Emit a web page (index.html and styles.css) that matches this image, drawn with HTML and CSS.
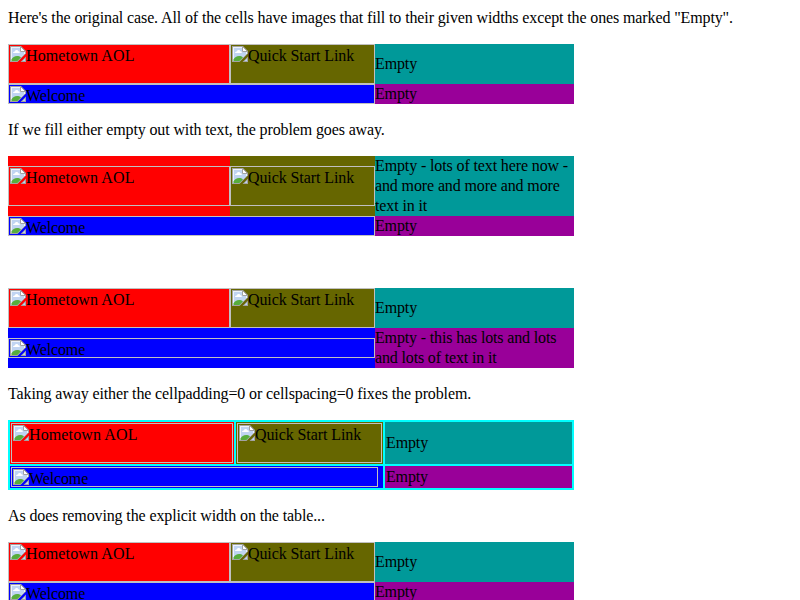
FILE: index.html
```html
<!DOCTYPE html>
<html lang="en">
<head>
<meta charset="utf-8">
<title>Table widths</title>
<link rel="stylesheet" href="styles.css">
</head>
<body>
<svg class="defs" aria-hidden="true">
  <symbol id="pic" viewBox="0 0 16 16">
    <path d="M0 0H11L16 5V7.500L7.500 16H0Z" fill="#a3a3a3"/>
    <path d="M1 1H10.500L15 5.500V7.500L7.500 15H1Z" fill="#eef3fb"/>
    <path d="M2 2H10V6H14V8.500L8 14H2Z" fill="#c0d4f2"/>
    <path d="M3 7C3 5.500 4.500 5.500 4.800 5.500C5 3.500 8 3.500 8.300 5.200C10 5 10 7 9.500 7Z" fill="#fff"/>
    <path d="M1.500 15V13.500C3 10 8 9 11 11.500L7.500 15Z" fill="#57ad3c"/>
    <path d="M10.500 .5V5.500H15.500Z" fill="#fff" stroke="#a3a3a3"/>
    <path d="M10.500 16L16 10.500V16Z" fill="#a3a3a3"/>
    <path d="M12.500 15L15 12.500V15Z" fill="#c0d4f2"/>
  </symbol>
</svg>

<p>Here's the original case. All of the cells have images that fill to their given widths except the ones marked "Empty".</p>

<table>
  <colgroup><col class="c1"><col class="c2"><col class="c3"></colgroup>
  <tr>
    <td class="red"><div class="pic home"><svg><use href="#pic"/></svg>Hometown AOL</div></td>
    <td class="olive"><div class="pic quick"><svg><use href="#pic"/></svg>Quick Start Link</div></td>
    <td class="teal">Empty</td>
  </tr>
  <tr>
    <td class="blue" colspan="2"><div class="pic welcome"><svg><use href="#pic"/></svg>Welcome</div></td>
    <td class="purple">Empty</td>
  </tr>
</table>

<p>If we fill either empty out with text, the problem goes away.</p>

<table>
  <colgroup><col class="c1"><col class="c2"><col class="c3"></colgroup>
  <tr>
    <td class="red"><div class="pic home"><svg><use href="#pic"/></svg>Hometown AOL</div></td>
    <td class="olive"><div class="pic quick"><svg><use href="#pic"/></svg>Quick Start Link</div></td>
    <td class="teal">Empty - lots of text here now - and more and more and more text in it</td>
  </tr>
  <tr>
    <td class="blue" colspan="2"><div class="pic welcome"><svg><use href="#pic"/></svg>Welcome</div></td>
    <td class="purple">Empty</td>
  </tr>
</table>

<p>&nbsp;</p>

<table>
  <colgroup><col class="c1"><col class="c2"><col class="c3"></colgroup>
  <tr>
    <td class="red"><div class="pic home"><svg><use href="#pic"/></svg>Hometown AOL</div></td>
    <td class="olive"><div class="pic quick"><svg><use href="#pic"/></svg>Quick Start Link</div></td>
    <td class="teal">Empty</td>
  </tr>
  <tr>
    <td class="blue" colspan="2"><div class="pic welcome"><svg><use href="#pic"/></svg>Welcome</div></td>
    <td class="purple">Empty - this has lots and lots and lots of text in it</td>
  </tr>
</table>

<p>Taking away either the cellpadding=0 or cellspacing=0 fixes the problem.</p>

<table class="spaced">
  <colgroup><col class="s1"><col class="s2"><col class="s3"></colgroup>
  <tr>
    <td class="red"><div class="pic home"><svg><use href="#pic"/></svg>Hometown AOL</div></td>
    <td class="olive"><div class="pic quick"><svg><use href="#pic"/></svg>Quick Start Link</div></td>
    <td class="teal">Empty</td>
  </tr>
  <tr>
    <td class="blue" colspan="2"><div class="pic welcome"><svg><use href="#pic"/></svg>Welcome</div></td>
    <td class="purple">Empty</td>
  </tr>
</table>

<p>As does removing the explicit width on the table...</p>

<table>
  <colgroup><col class="c1"><col class="c2"><col class="c3"></colgroup>
  <tr>
    <td class="red"><div class="pic home"><svg><use href="#pic"/></svg>Hometown AOL</div></td>
    <td class="olive"><div class="pic quick"><svg><use href="#pic"/></svg>Quick Start Link</div></td>
    <td class="teal">Empty</td>
  </tr>
  <tr>
    <td class="blue" colspan="2"><div class="pic welcome"><svg><use href="#pic"/></svg>Welcome</div></td>
    <td class="purple">Empty</td>
  </tr>
</table>
</body>
</html>
```

FILE: styles.css
```css
html {
  height: 600px;
  overflow: hidden;
}

body {
  margin: 8px;
  background: #fff;
  color: #000;
  font: 16px/20px "Liberation Serif", serif;
  letter-spacing: -0.122px;
}

.defs {
  position: absolute;
  width: 0;
  height: 0;
}

p {
  margin: 16px 0;
}

body > p:first-of-type {
  margin-top: 0;
}

table {
  width: 566px;
  table-layout: fixed;
  border-collapse: separate;
  border-spacing: 0;
}

td {
  padding: 0;
  vertical-align: middle;
}

.c1 { width: 222px; }
.c2 { width: 145px; }
.c3 { width: 199px; }

.spaced {
  border-spacing: 2px;
  background: #0ff;
}

.spaced td {
  padding: 1px;
}

.s1 { width: 224px; }
.s2 { width: 147px; }
.s3 { width: 187px; }

.red { background: #f00; }
.olive { background: #660; }
.teal { background: #099; }
.blue { background: #00f; }
.purple { background: #909; letter-spacing: -0.15px; }

.pic {
  box-sizing: border-box;
  height: 40px;
  padding: 1px;
  border: 1px solid silver;
  overflow: hidden;
  white-space: nowrap;
}

.pic svg {
  float: left;
  width: 16px;
  height: 16px;
}

.home {
  width: 222px;
  letter-spacing: 0.12px;
}

.quick {
  width: 145px;
  letter-spacing: -0.09px;
}

.welcome {
  width: 367px;
  height: 20px;
}
```
